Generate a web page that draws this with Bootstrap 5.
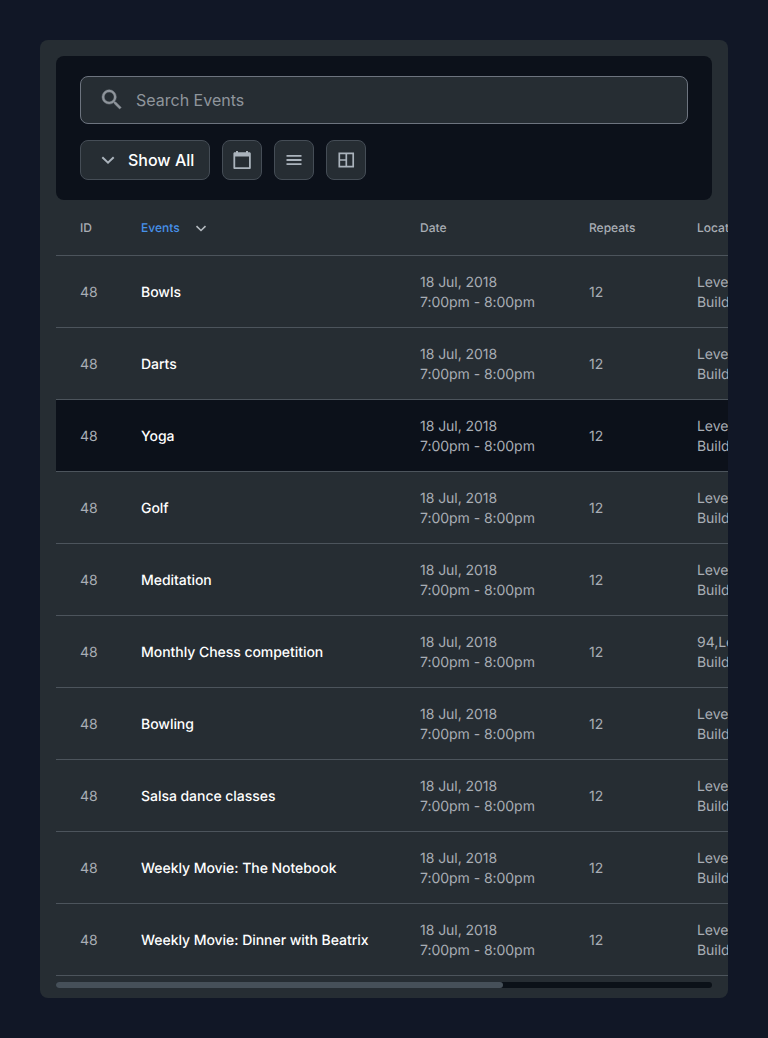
<!DOCTYPE html>
<html lang="en">
<head>
<meta charset="utf-8">
<meta name="viewport" content="width=device-width, initial-scale=1">
<title>Events</title>
<link href="https://cdn.jsdelivr.net/npm/bootstrap@5.3.0/dist/css/bootstrap.min.css" rel="stylesheet">
<style>
  body { background: #111726; font-family: Inter, sans-serif; color: #a9aeb5; min-height: 1038px; text-rendering: geometricPrecision; }
  .panel { background: #262d33; border-radius: 8px; height: 958px; }
  .toolbar { background: #0c111a; border-radius: 8px; height: 144px; padding: 20px 24px; margin-right: 16px; }
  .search { background: #262d33; border: 1px solid #6d747f; border-radius: 8px; height: 48px; padding-left: 19px; }
  .search input { background: none; border: 0; outline: 0; padding: 0; color: #fff; font-size: 16px; width: 400px; margin-left: 12px; }
  .search input::placeholder { color: #8f959c; opacity: 1; }
  .tool { background: #262d33; border: 1px solid #454d56; border-radius: 8px; height: 40px; width: 40px; padding: 0; color: #aab3bc; }
  .tool-wide { width: 130px; padding-left: 15px; gap: 8px; }
  .tool-wide span { color: #fff; font-size: 16px; font-weight: 500; }
  .events { table-layout: fixed; border-collapse: separate; border-spacing: 0; width: 963px; font-size: 14px; line-height: 20px; }
  .events th, .events td { padding: 1px 0 0; vertical-align: middle; white-space: nowrap; border-bottom: 1px solid #4c545c; }
  .events th { height: 56px; font-size: 12px; line-height: 16px; font-weight: 500; }
  .events td { height: 72px; padding-top: 3px; letter-spacing: -.003em; }
  .events th:first-child, .events td:first-child { padding-left: 24px; }
  .events td:nth-child(2) { color: #fff; font-weight: 500; }
  .events .current { background: #0c111a; }
  .sorted { color: #4791ea; }
  .sorted svg { color: #b4bac0; margin-left: 15px; }
  .track { background: #0b1118; height: 6px; border-radius: 3px; margin: 6px 16px 0 0; }
  .thumb { background: #465059; height: 6px; width: 447px; border-radius: 3px; }
</style>
</head>
<body>
<main class="p-4">
  <div class="panel m-3 pt-3 ps-3 overflow-hidden">
    <div class="toolbar d-flex flex-column gap-3">
      <div class="search d-flex align-items-center flex-shrink-0">
        <svg width="24" height="24" viewBox="0 0 24 24" fill="#8f959c" stroke="#8f959c" stroke-width=".4"><path transform="translate(-1.300 -1.500) scale(1.1)" d="M15.5 14h-.79l-.28-.27A6.47 6.47 0 0 0 16 9.500 6.500 6.500 0 1 0 9.500 16c1.610 0 3.090-.59 4.230-1.570l.27.28v.79l5 4.990L20.490 19l-4.990-5zm-6 0A4.500 4.500 0 1 1 14 9.500 4.490 4.490 0 0 1 9.500 14z"/></svg>
        <input type="text" placeholder="Search Events" aria-label="Search Events">
      </div>
      <div class="d-flex" style="gap:12px">
        <button class="tool tool-wide d-flex align-items-center"><svg width="24" height="24" viewBox="0 0 24 24" fill="none" stroke="currentColor" stroke-width="2"><path d="M6.300 9.200 12 14.700l5.700-5.500"/></svg><span>Show All</span></button>
        <button class="tool d-flex align-items-center justify-content-center" aria-label="Calendar"><svg width="24" height="24" viewBox="0 0 24 24" fill="none" stroke="currentColor" stroke-width="1.800"><path d="M4.300 5.500h15.600v14.600H4.300z" stroke-linejoin="round"/><path d="M4 4.600h16v4H4zM6 3h2v2H6zM16 3h2v2h-2z" fill="currentColor" stroke="none"/></svg></button>
        <button class="tool d-flex align-items-center justify-content-center" aria-label="List"><svg width="24" height="24" viewBox="0 0 24 24" fill="currentColor"><path d="M4.500 7h15v1.800h-15zM4.500 11.100h15v1.800h-15zM4.500 15.200h15v1.800h-15z"/></svg></button>
        <button class="tool d-flex align-items-center justify-content-center" aria-label="Board"><svg width="24" height="24" viewBox="0 0 24 24" fill="none" stroke="currentColor" stroke-width="1.700"><path d="M5.300 5.300h13.900v13.400H5.300zM12.300 5v14M5 12h7"/></svg></button>
      </div>
    </div>
    <table class="events">
      <colgroup><col style="width:85px"><col style="width:279px"><col style="width:169px"><col style="width:108px"><col></colgroup>
      <thead><tr><th>ID</th><th class="sorted">Events<svg width="12" height="12" viewBox="0 0 12 12" fill="none" stroke="currentColor" stroke-width="1.600"><path d="M1.500 3.200 6 7.500 10.500 3.200"/></svg></th><th>Date</th><th>Repeats</th><th>Location</th></tr></thead>
      <tbody>
        <tr><td>48</td><td>Bowls</td><td>18 Jul, 2018<br>7:00pm - 8:00pm</td><td>12</td><td>Level<br>Building</td></tr>
        <tr><td>48</td><td>Darts</td><td>18 Jul, 2018<br>7:00pm - 8:00pm</td><td>12</td><td>Level<br>Building</td></tr>
        <tr class="current"><td>48</td><td>Yoga</td><td>18 Jul, 2018<br>7:00pm - 8:00pm</td><td>12</td><td>Level<br>Building</td></tr>
        <tr><td>48</td><td>Golf</td><td>18 Jul, 2018<br>7:00pm - 8:00pm</td><td>12</td><td>Level<br>Building</td></tr>
        <tr><td>48</td><td>Meditation</td><td>18 Jul, 2018<br>7:00pm - 8:00pm</td><td>12</td><td>Level<br>Building</td></tr>
        <tr><td>48</td><td>Monthly Chess competition</td><td>18 Jul, 2018<br>7:00pm - 8:00pm</td><td>12</td><td>94,Level<br>Building</td></tr>
        <tr><td>48</td><td>Bowling</td><td>18 Jul, 2018<br>7:00pm - 8:00pm</td><td>12</td><td>Level<br>Building</td></tr>
        <tr><td>48</td><td>Salsa dance classes</td><td>18 Jul, 2018<br>7:00pm - 8:00pm</td><td>12</td><td>Level<br>Building</td></tr>
        <tr><td>48</td><td>Weekly Movie: The Notebook</td><td>18 Jul, 2018<br>7:00pm - 8:00pm</td><td>12</td><td>Level<br>Building</td></tr>
        <tr><td>48</td><td>Weekly Movie: Dinner with Beatrix</td><td>18 Jul, 2018<br>7:00pm - 8:00pm</td><td>12</td><td>Level<br>Building</td></tr>
      </tbody>
    </table>
    <div class="track"><div class="thumb"></div></div>
  </div>
</main>
<script src="https://cdn.jsdelivr.net/npm/bootstrap@5.3.0/dist/js/bootstrap.bundle.min.js"></script>
</body>
</html>
